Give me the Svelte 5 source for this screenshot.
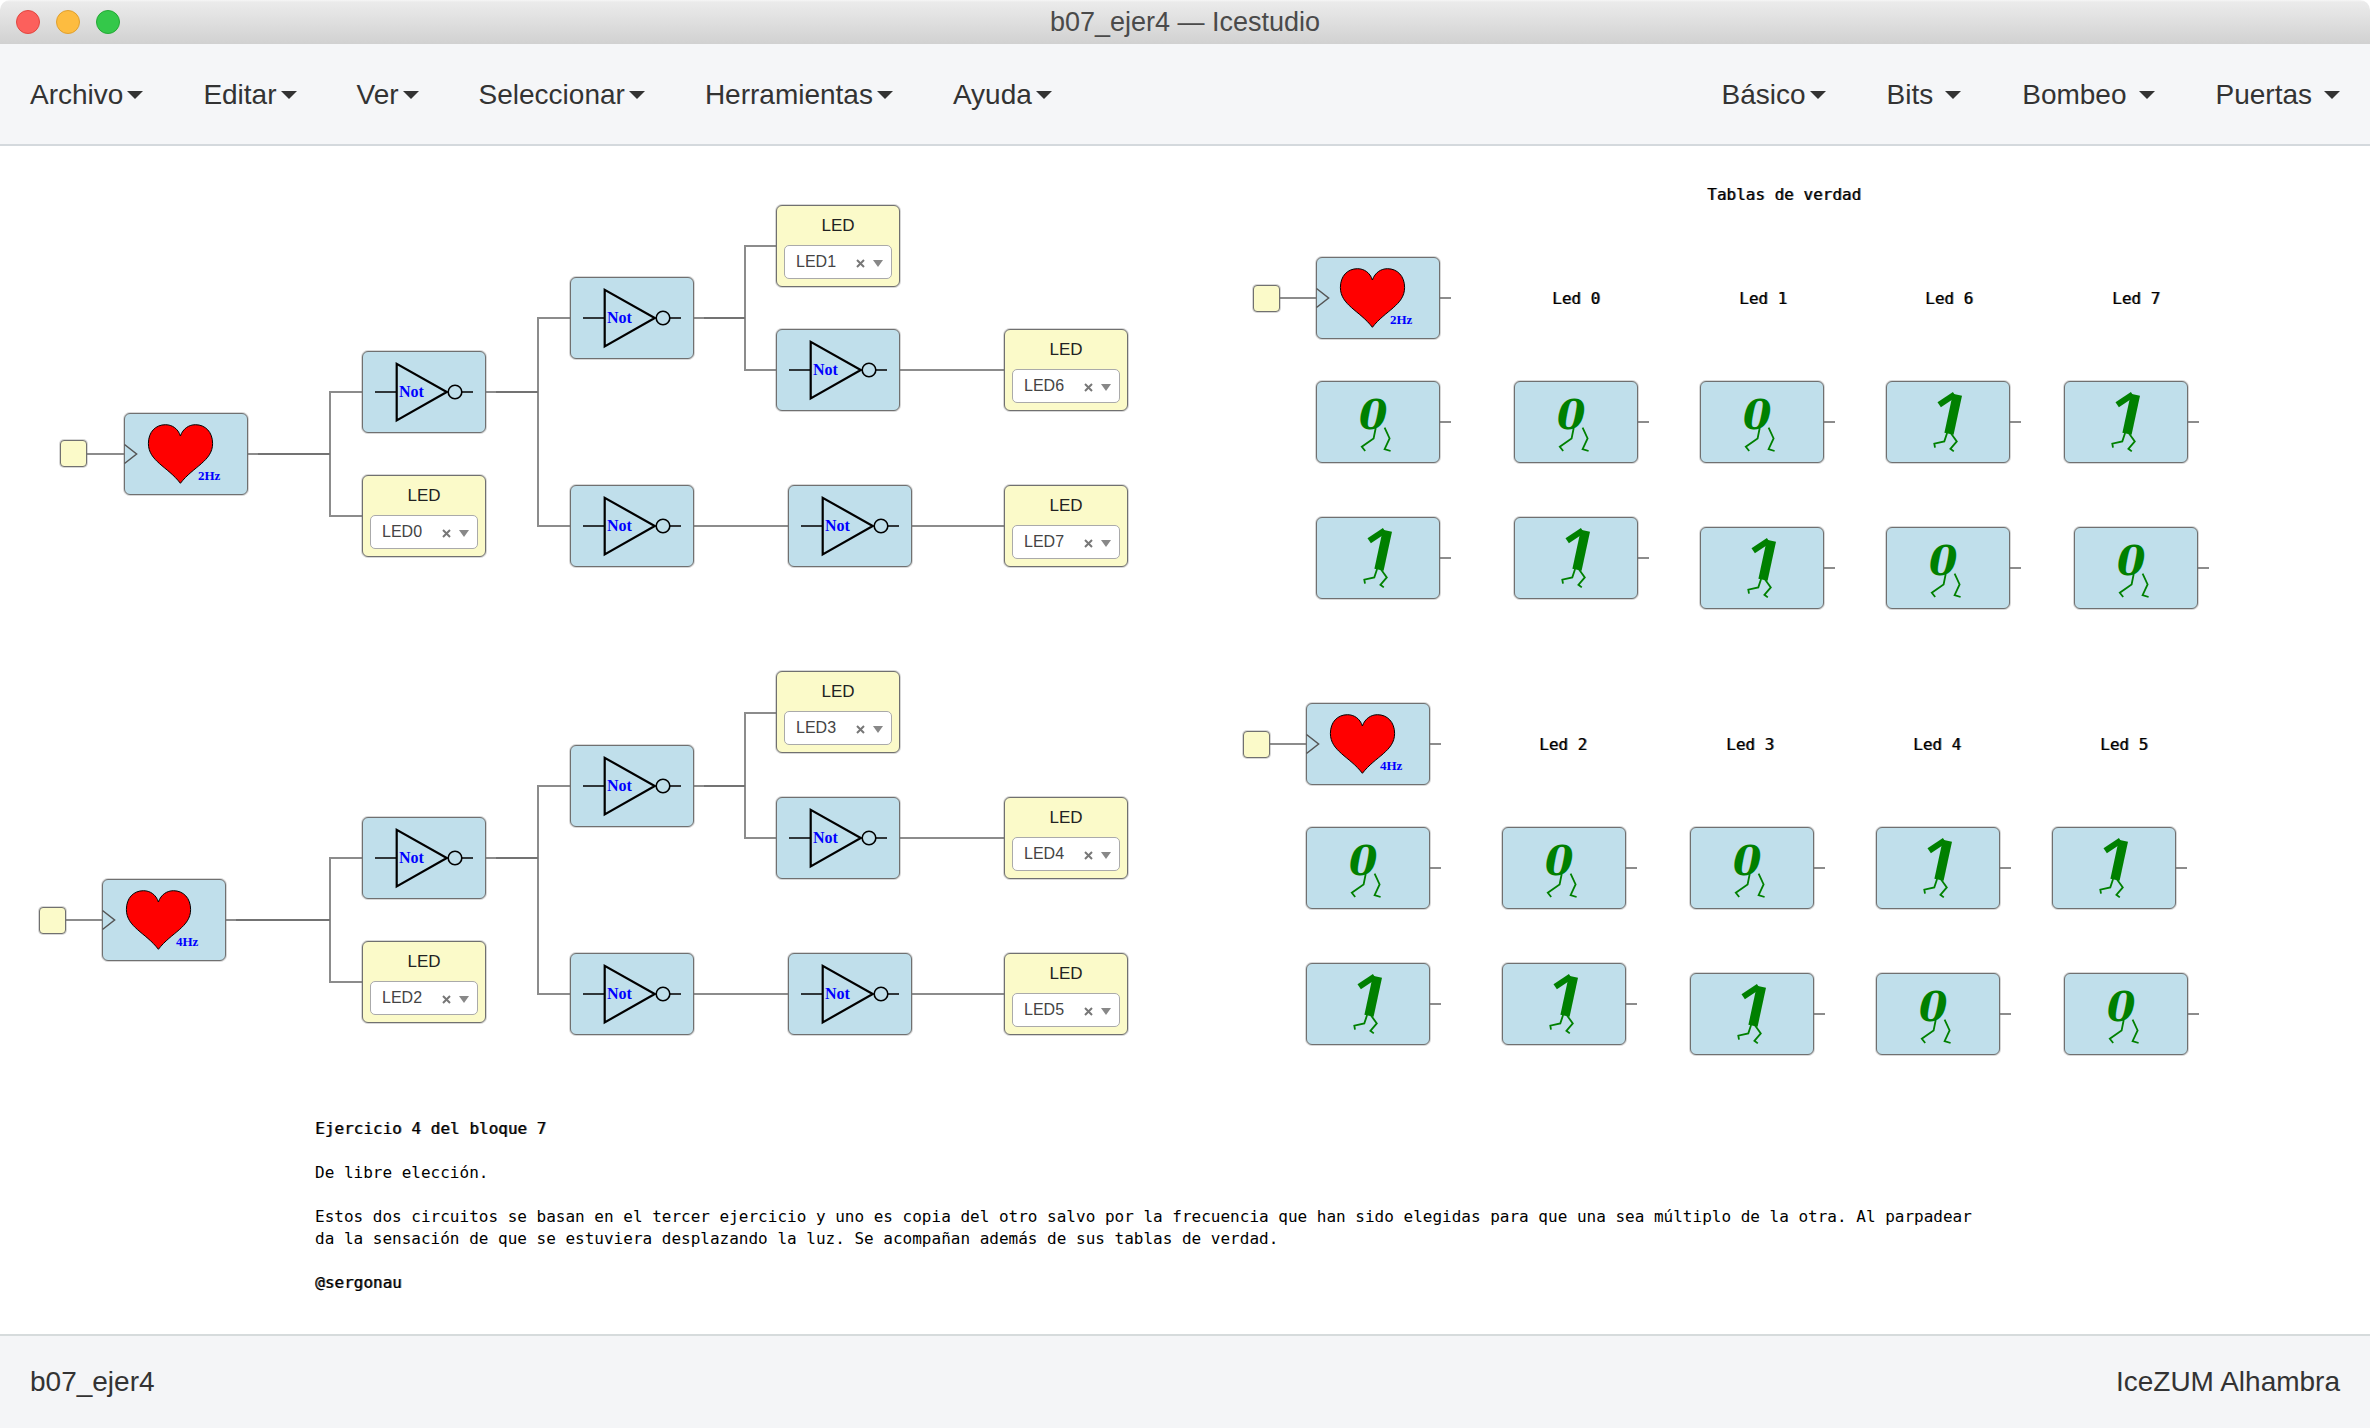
<script>
  const leftMenus = ['Archivo', 'Editar', 'Ver', 'Seleccionar', 'Herramientas', 'Ayuda'];
  const rightMenus = [
    { label: 'Básico', spaced: false },
    { label: 'Bits', spaced: true },
    { label: 'Bombeo', spaced: true },
    { label: 'Puertas', spaced: true },
  ];

  const pins = [
    { x: 60, y: 294 },
    { x: 39, y: 761 },
    { x: 1253, y: 139 },
    { x: 1243, y: 585 },
  ];

  const blocks = [
    { kind: 'heart', x: 124, y: 267, text: '2Hz' },
    { kind: 'not', x: 362, y: 205 },
    { kind: 'not', x: 570, y: 131 },
    { kind: 'not', x: 776, y: 183 },
    { kind: 'not', x: 570, y: 339 },
    { kind: 'not', x: 788, y: 339 },

    { kind: 'heart', x: 102, y: 733, text: '4Hz' },
    { kind: 'not', x: 362, y: 671 },
    { kind: 'not', x: 570, y: 599 },
    { kind: 'not', x: 776, y: 651 },
    { kind: 'not', x: 570, y: 807 },
    { kind: 'not', x: 788, y: 807 },

    { kind: 'heart', x: 1316, y: 111, text: '2Hz' },
    { kind: 'zero', x: 1316, y: 235 },
    { kind: 'zero', x: 1514, y: 235 },
    { kind: 'zero', x: 1700, y: 235 },
    { kind: 'one', x: 1886, y: 235 },
    { kind: 'one', x: 2064, y: 235 },
    { kind: 'one', x: 1316, y: 371 },
    { kind: 'one', x: 1514, y: 371 },
    { kind: 'one', x: 1700, y: 381 },
    { kind: 'zero', x: 1886, y: 381 },
    { kind: 'zero', x: 2074, y: 381 },

    { kind: 'heart', x: 1306, y: 557, text: '4Hz' },
    { kind: 'zero', x: 1306, y: 681 },
    { kind: 'zero', x: 1502, y: 681 },
    { kind: 'zero', x: 1690, y: 681 },
    { kind: 'one', x: 1876, y: 681 },
    { kind: 'one', x: 2052, y: 681 },
    { kind: 'one', x: 1306, y: 817 },
    { kind: 'one', x: 1502, y: 817 },
    { kind: 'one', x: 1690, y: 827 },
    { kind: 'zero', x: 1876, y: 827 },
    { kind: 'zero', x: 2064, y: 827 },
  ];

  const leds = [
    { x: 362, y: 329, value: 'LED0' },
    { x: 776, y: 59, value: 'LED1' },
    { x: 1004, y: 183, value: 'LED6' },
    { x: 1004, y: 339, value: 'LED7' },
    { x: 362, y: 795, value: 'LED2' },
    { x: 776, y: 525, value: 'LED3' },
    { x: 1004, y: 651, value: 'LED4' },
    { x: 1004, y: 807, value: 'LED5' },
  ];
  const ledNames = ['LED0', 'LED1', 'LED2', 'LED3', 'LED4', 'LED5', 'LED6', 'LED7'];

  const captions = [
    { x: 1707, y: 38, text: 'Tablas de verdad' },
    { x: 1552, y: 142, text: 'Led 0' },
    { x: 1739, y: 142, text: 'Led 1' },
    { x: 1925, y: 142, text: 'Led 6' },
    { x: 2112, y: 142, text: 'Led 7' },
    { x: 1539, y: 588, text: 'Led 2' },
    { x: 1726, y: 588, text: 'Led 3' },
    { x: 1913, y: 588, text: 'Led 4' },
    { x: 2100, y: 588, text: 'Led 5' },
  ];

  const wires = [
    'M87 308H124', 'M248 308H330', 'M362 246H330V370H362',
    'M486 246H538', 'M570 172H538V380H570',
    'M694 172H745', 'M776 100H745V224H776',
    'M900 224H1004', 'M694 380H788', 'M912 380H1004',

    'M66 774H102', 'M226 774H330', 'M362 712H330V836H362',
    'M486 712H538', 'M570 640H538V848H570',
    'M694 640H745', 'M776 567H745V692H776',
    'M900 692H1004', 'M694 848H788', 'M912 848H1004',

    'M1280 152H1316', 'M1270 598H1306',
  ];
  const trunks = [
    'M258 308H330', 'M496 246H538', 'M704 172H745',
    'M236 774H330', 'M496 712H538', 'M704 640H745',
  ];
  const stubs = blocks.filter((b) => b.x > 1200).map((b) => `M${b.x + 124} ${b.y + 41}h11`);
</script>

<div class="window">
  <header class="titlebar">
    <div class="lights">
      <button class="light close" aria-label="Cerrar"></button>
      <button class="light minimize" aria-label="Minimizar"></button>
      <button class="light zoom" aria-label="Ampliar"></button>
    </div>
    <h1>b07_ejer4 — Icestudio</h1>
  </header>

  <nav class="menubar">
    <div class="menus">
      {#each leftMenus as label}
        <button class="menu">{label}<span class="caret"></span></button>
      {/each}
    </div>
    <div class="menus collections">
      {#each rightMenus as m}
        <button class="menu" class:spaced={m.spaced}>{m.label}<span class="caret"></span></button>
      {/each}
    </div>
  </nav>

  <main class="canvas">
    <svg class="wires" aria-hidden="true">
      {#each [...wires, ...stubs] as d}
        <path class="wire" {d} />
      {/each}
      {#each trunks as d}
        <path class="wire trunk" {d} />
      {/each}
    </svg>

    {#each pins as p}
      <div class="pin" style="left:{p.x}px;top:{p.y}px"></div>
    {/each}

    {#each blocks as b}
      <div class="block" style="left:{b.x}px;top:{b.y}px">
        <svg viewBox="0 0 124 82" role="img" aria-label={b.kind}>
          {#if b.kind === 'heart'}
            <path class="clock" d="M0.5 31.5L12.6 41L0.5 50.5" />
            <path
              class="heart"
              d="M56.4 23C54 15.5 48 11.7 41.5 11.7C31.5 11.7 24.4 19 24.4 30.5C24.4 48 43.5 53.5 56.4 70.3C69.3 53.5 88.6 48 88.6 30.5C88.6 19 81.3 11.7 71.5 11.7C65 11.7 59 15.5 56.4 23Z"
            />
            <text class="freq" x="74" y="67">{b.text}</text>
          {:else if b.kind === 'not'}
            <path class="gate thin" d="M13 41H35M100 41H111" />
            <path class="gate" d="M34.7 12.8V69.4L84.8 41Z" />
            <circle class="gate thin" cx="93" cy="41" r="6.8" />
            <text class="not" x="37" y="46">Not</text>
          {:else if b.kind === 'zero'}
            <text class="digit" x="43" y="48">0</text>
            <path class="leg" d="M59.7 47L57.6 57.4L45.8 65.7L49.2 70M68.6 46.7L73.6 57.4L68.6 68.2L74.6 70" />
          {:else}
            <path class="stem" d="M71.4 13.7L63 52.7" />
            <path class="arm" d="M53.2 23.8L68.6 13.4" />
            <path class="leg" d="M61.1 52L58.3 60.4L48.3 62.7L49 66.7M64.7 52L70.8 60.4L64.4 67.8L67.8 70.4" />
          {/if}
        </svg>
      </div>
    {/each}

    {#each leds as l}
      <div class="led" style="left:{l.x}px;top:{l.y}px">
        <label for={l.value}>LED</label>
        <div class="picker">
          <select id={l.value} value={l.value}>
            {#each ledNames as n}
              <option value={n}>{n}</option>
            {/each}
          </select>
          <button class="clear" aria-label="Quitar {l.value}">
            <svg viewBox="0 0 9 9"><path d="M1 1L8 8M8 1L1 8" /></svg>
          </button>
          <span class="arrow"></span>
        </div>
      </div>
    {/each}

    {#each captions as c}
      <strong class="caption" style="left:{c.x}px;top:{c.y}px">{c.text}</strong>
    {/each}

    <article class="note">
      <p><strong>Ejercicio 4 del bloque 7</strong></p>
      <p>De libre elección.</p>
      <p>
        Estos dos circuitos se basan en el tercer ejercicio y uno es copia del otro salvo por la frecuencia que han sido
        elegidas para que una sea múltiplo de la otra. Al parpadear da la sensación de que se estuviera desplazando la
        luz. Se acompañan además de sus tablas de verdad.
      </p>
      <p><strong>@sergonau</strong></p>
    </article>
  </main>

  <footer class="statusbar">
    <span>b07_ejer4</span>
    <span>IceZUM Alhambra</span>
  </footer>
</div>

<style>
  :global(body) {
    margin: 0;
    background: #fff;
  }
  .window {
    display: flex;
    flex-direction: column;
    min-height: 100vh;
    font-family: 'Liberation Sans', Helvetica, Arial, sans-serif;
    color: #333;
  }
  button {
    border: 0;
    padding: 0;
    background: none;
    font: inherit;
    color: inherit;
  }

  .titlebar {
    display: grid;
    grid-template-columns: 1fr auto 1fr;
    align-items: center;
    height: 44px;
    padding: 0 16px;
    border-radius: 10px 10px 0 0;
    background: linear-gradient(#f6f6f6 0, #ebebeb 2px, #d1d1d1 100%);
  }
  .lights {
    display: flex;
    gap: 16px;
  }
  .light {
    width: 24px;
    height: 24px;
    border-radius: 50%;
  }
  .close {
    background: #fc605c;
    border: 1px solid #e2463f;
  }
  .minimize {
    background: #fdbc40;
    border: 1px solid #e0a02e;
  }
  .zoom {
    background: #34c84a;
    border: 1px solid #24a935;
  }
  h1 {
    margin: 0;
    font-size: 27px;
    font-weight: 400;
    line-height: 44px;
    color: #4a4a4a;
  }

  .menubar {
    display: flex;
    justify-content: space-between;
    box-sizing: border-box;
    height: 102px;
    padding-top: 2px;
    border-bottom: 2px solid #d4d9dd;
    background: #f5f6f8;
  }
  .menus {
    display: flex;
  }
  .collections {
    gap: 1px;
  }
  .menu {
    display: flex;
    align-items: center;
    padding: 0 30px;
    font-size: 28px;
    line-height: 32px;
  }
  .caret {
    margin-left: 4px;
    border: 8px solid transparent;
    border-top-color: #333;
    border-bottom: 0;
  }
  .spaced .caret {
    margin-left: 12px;
  }

  .canvas {
    position: relative;
    flex: 1;
    background: #fff;
  }
  .wires {
    position: absolute;
    inset: 0;
    width: 100%;
    height: 100%;
  }
  .wire {
    fill: none;
    stroke: #8c8c8c;
    stroke-width: 2;
  }
  .trunk {
    stroke: #737373;
  }

  .pin,
  .block,
  .led {
    position: absolute;
    box-sizing: border-box;
    border: 1px solid #707070;
    box-shadow: 0 0 0 1px #70707048;
  }
  .pin {
    width: 27px;
    height: 27px;
    border-radius: 4px;
    background: #fbfac9;
  }
  .block,
  .led {
    width: 124px;
    height: 82px;
    border-radius: 6px;
  }
  .block {
    background: #c0dfeb;
  }
  .block svg {
    display: block;
    width: 124px;
    height: 82px;
    margin: -1px;
  }
  .clock {
    fill: none;
    stroke: #555;
    stroke-width: 1.5;
  }
  .heart {
    fill: #f00;
    stroke: #000;
    stroke-width: 1;
  }
  .freq,
  .not {
    font-family: 'Liberation Serif', 'Times New Roman', serif;
    font-weight: 700;
    fill: #00f;
  }
  .freq {
    font-size: 13px;
  }
  .not {
    font-size: 16px;
  }
  .gate {
    fill: none;
    stroke: #000;
    stroke-width: 2.2;
  }
  .gate.thin {
    stroke-width: 1.6;
  }
  .digit {
    font-family: 'DejaVu Serif', serif;
    font-size: 41px;
    font-style: italic;
    font-weight: 700;
    fill: #008000;
  }
  .leg,
  .stem,
  .arm {
    fill: none;
    stroke: #008000;
  }
  .leg {
    stroke-width: 1.8;
  }
  .stem {
    stroke-width: 9.4;
  }
  .arm {
    stroke-width: 6;
  }

  .led {
    display: flex;
    flex-direction: column;
    padding: 0 7px;
    background: #fbfac9;
  }
  .led label {
    height: 39px;
    font-size: 17px;
    line-height: 40px;
    text-align: center;
    color: #222;
  }
  .picker {
    position: relative;
    display: flex;
  }
  select {
    flex: 1;
    box-sizing: border-box;
    height: 34px;
    padding: 0 11px 2px;
    border: 1px solid #aaa;
    border-radius: 5px;
    appearance: none;
    background: #fff;
    font-family: inherit;
    font-size: 16px;
    color: #444;
  }
  .clear {
    position: absolute;
    top: 14px;
    right: 27px;
    width: 9px;
    height: 9px;
  }
  .clear svg {
    display: block;
  }
  .clear path {
    stroke: #777;
    stroke-width: 2;
  }
  .arrow {
    position: absolute;
    top: 15px;
    right: 9px;
    border: 5px solid transparent;
    border-top: 7px solid #888;
    border-bottom: 0;
    pointer-events: none;
  }

  .caption,
  .note {
    position: absolute;
    font-family: 'DejaVu Sans Mono', Monaco, monospace;
    font-size: 16px;
    line-height: 22px;
    color: #000;
  }
  .caption {
    white-space: nowrap;
  }
  strong {
    font-weight: 400;
    text-shadow: 1px 0 #0008;
  }
  .note {
    left: 315px;
    top: 972px;
    max-width: 1680px;
  }
  .note p {
    margin: 0 0 22px;
  }

  .statusbar {
    display: flex;
    align-items: center;
    justify-content: space-between;
    height: 92px;
    padding: 0 30px;
    border-top: 2px solid #d6dbdc;
    background: #f4f5f7;
    font-size: 28px;
  }
</style>
